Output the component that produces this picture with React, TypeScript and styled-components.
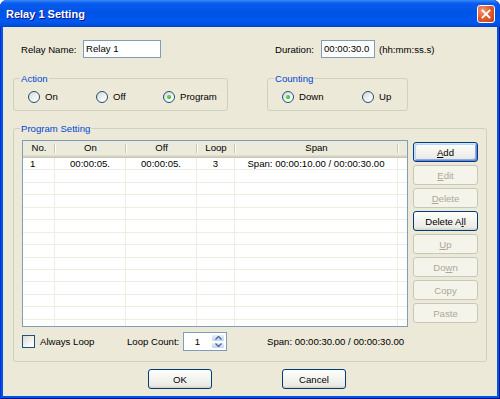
import React from 'react';
import styled, { createGlobalStyle, css } from 'styled-components';

const FACE = '#ECE9D8';
const GRID = '#EFEDE2';

const GlobalStyle = createGlobalStyle`
  html, body {
    margin: 0;
    padding: 0;
    background: #ffffff;
  }
  body {
    font-family: "Liberation Sans", Arial, sans-serif;
    font-size: 9.6px;
    color: #000000;
  }
`;

const Window = styled.div`
  width: 500px;
  height: 399px;
  box-sizing: border-box;
  display: flex;
  flex-direction: column;
  background: #0055E5;
  border-radius: 7px 7px 0 0;
  overflow: hidden;
  box-shadow: inset 1px 0 #0831D9, inset -1px 0 #00138C, inset 0 -1px #00138C;
`;

const TitleBar = styled.div`
  height: 27px;
  flex: none;
  display: flex;
  align-items: center;
  justify-content: space-between;
  padding: 0 5px 0 6px;
  background: linear-gradient(
    to bottom,
    #3A8CF8 0%,
    #0A5CEE 12%,
    #0053E6 45%,
    #0058EE 80%,
    #0050E0 92%,
    #0042C8 100%
  );
`;

const TitleText = styled.span`
  font-family: "Liberation Sans", Arial, sans-serif;
  font-weight: bold;
  font-size: 11px;
  color: #ffffff;
  text-shadow: 1px 1px #0F1089;
`;

const CloseButton = styled.button`
  width: 18px;
  height: 18px;
  padding: 0;
  border: 1px solid #ffffff;
  border-radius: 3px;
  background: radial-gradient(circle at 30% 30%, #F29A7C 0%, #E0602F 45%, #C63D14 100%);
  display: flex;
  align-items: center;
  justify-content: center;
`;

const Client = styled.div`
  flex: 1;
  margin: 0 3px 3px;
  background: ${FACE};
  display: flex;
  flex-direction: column;
  padding-left: 10px;
`;

const NameRow = styled.div`
  display: flex;
  align-items: center;
  height: 18px;
  margin-top: 13px;
  padding-left: 8px;
`;

const Label = styled.span<{ $width?: number; $gap?: number }>`
  flex: none;
  width: ${(p) => (p.$width ? `${p.$width}px` : 'auto')};
  margin-left: ${(p) => p.$gap || 0}px;
  white-space: nowrap;
`;

const TextBox = styled.div<{ $width: number }>`
  flex: none;
  width: ${(p) => p.$width}px;
  height: 18px;
  box-sizing: border-box;
  border: 1px solid #7F9DB9;
  background: #ffffff;
  padding: 0 2px;
  line-height: 16px;
  white-space: nowrap;
`;

const GroupsRow = styled.div`
  display: flex;
  margin-top: 20px;
`;

const Group = styled.div<{ $width: number; $height: number; $gap?: number }>`
  position: relative;
  flex: none;
  box-sizing: border-box;
  width: ${(p) => p.$width}px;
  height: ${(p) => p.$height}px;
  margin-left: ${(p) => p.$gap || 0}px;
  border: 1px solid #D0D0BF;
  border-radius: 3px;
`;

const Legend = styled.span`
  position: absolute;
  top: -7px;
  left: 6px;
  padding: 0 1px;
  line-height: 13px;
  background: ${FACE};
  color: #0046D5;
`;

const RadioRow = styled.div`
  display: flex;
  align-items: center;
  height: 100%;
  box-sizing: border-box;
  padding: 4px 0 0 14px;
`;

const RadioItem = styled.label<{ $width?: number }>`
  display: flex;
  align-items: center;
  gap: 5px;
  flex: none;
  width: ${(p) => (p.$width ? `${p.$width}px` : 'auto')};
`;

const RadioCircle = styled.span<{ $checked?: boolean }>`
  width: 12px;
  height: 12px;
  box-sizing: border-box;
  border-radius: 50%;
  border: 1px solid #1C5180;
  background: linear-gradient(135deg, #D6D6CE 0%, #F4F4EF 60%, #FFFFFF 100%);
  display: flex;
  align-items: center;
  justify-content: center;
  flex: none;

  &::after {
    content: '';
    display: ${(p) => (p.$checked ? 'block' : 'none')};
    width: 4px;
    height: 4px;
    border-radius: 50%;
    background: radial-gradient(circle at 35% 35%, #62DF5E, #21A121);
  }
`;

const ProgramGroup = styled(Group)`
  margin-top: 17px;
  padding: 11px 7px 0 8px;
  display: flex;
  flex-direction: column;
`;

const ListArea = styled.div`
  display: flex;
  align-items: flex-start;
`;

const ListView = styled.div`
  width: 386px;
  height: 187px;
  box-sizing: border-box;
  border: 1px solid #7F9DB9;
  background: #ffffff;
  overflow: hidden;
  flex: none;
`;

const HeaderRow = styled.div`
  display: flex;
  height: 17px;
  background: #EBEADB;
  box-shadow: inset 0 -1px #CBC7B8, inset 0 -2px #D6D2C2, inset 0 -3px #E2DECD;
`;

const HeaderCell = styled.div<{ $width: number }>`
  position: relative;
  flex: none;
  width: ${(p) => p.$width}px;
  line-height: 14px;
  text-align: center;

  &::after {
    content: '';
    position: absolute;
    right: 0;
    top: 3px;
    bottom: 5px;
    width: 1px;
    background: #C7C5B2;
    box-shadow: 1px 0 #ffffff;
  }
`;

const Row = styled.div`
  display: flex;
  height: 12.45px;
  box-sizing: border-box;
  border-bottom: 1px solid ${GRID};
`;

const Cell = styled.div<{ $width: number; $align?: string }>`
  flex: none;
  width: ${(p) => p.$width}px;
  box-sizing: border-box;
  border-right: 1px solid ${GRID};
  padding-left: ${(p) => (p.$align === 'left' ? '7px' : '0')};
  text-align: ${(p) => p.$align || 'center'};
  line-height: 11.45px;
  white-space: nowrap;
  overflow: hidden;
`;

const ButtonColumn = styled.div`
  display: flex;
  flex-direction: column;
  gap: 3px;
  margin-left: 5px;
  padding-top: 2px;
`;

const PushButton = styled.button<{ $default?: boolean; $width?: number }>`
  width: ${(p) => p.$width || 65}px;
  height: 20px;
  padding: 0;
  font: inherit;
  color: #000000;
  border: 1px solid #003C74;
  border-radius: 3px;
  background: linear-gradient(to bottom, #FFFFFF 0%, #F6F6F2 35%, #ECEBE6 85%, #D6D0C5 100%);
  ${(p) =>
    p.$default &&
    css`
      box-shadow: inset 1px 1px #CEE7FF, inset -1px -1px #6982EE, inset 2px 2px #BCD4F6,
        inset -2px -2px #89ADE4;
    `}

  &:disabled {
    border-color: #C9C7BA;
    background: #F5F4EA;
    color: #ACA899;
    box-shadow: none;
  }

  u {
    text-decoration-thickness: 1px;
    text-underline-offset: 1px;
  }
`;

const BottomRow = styled.div`
  display: flex;
  align-items: center;
  height: 19px;
  margin-top: 5px;
`;

const CheckItem = styled.label`
  display: flex;
  align-items: center;
  gap: 5px;
  width: 105px;
  flex: none;
`;

const CheckBox = styled.span`
  width: 13px;
  height: 13px;
  box-sizing: border-box;
  border: 1px solid #1C5180;
  background: linear-gradient(135deg, #DCDCD7 0%, #F4F4EF 60%, #FFFFFF 100%);
  flex: none;
`;

const Spinner = styled.div`
  display: flex;
  width: 44px;
  height: 19px;
  box-sizing: border-box;
  border: 1px solid #7F9DB9;
  background: #ffffff;
  flex: none;
`;

const SpinValue = styled.div`
  flex: 1;
  text-align: center;
  line-height: 17px;
`;

const SpinArrows = styled.div`
  width: 15px;
  display: flex;
  flex-direction: column;
  padding: 1px 1px 1px 0;
  box-sizing: border-box;
`;

const SpinArrow = styled.div`
  flex: 1;
  border-radius: 2px;
  border: 1px solid #ffffff;
  background: linear-gradient(to bottom, #E6EEFC, #C1D3FB);
  display: flex;
  align-items: center;
  justify-content: center;
`;

const DialogButtons = styled.div`
  display: flex;
  margin-top: 7px;
  padding-left: 135px;
  gap: 70px;
`;

const columns = [
  { title: 'No.', width: 32, align: 'left' },
  { title: 'On', width: 71 },
  { title: 'Off', width: 71 },
  { title: 'Loop', width: 38 },
  { title: 'Span', width: 163 },
];

const rows: string[][] = [['1', '00:00:05.', '00:00:05.', '3', 'Span: 00:00:10.00 / 00:00:30.00']];
while (rows.length < 14) rows.push(['', '', '', '', '']);

const Arrow = ({ up }: { up?: boolean }) => (
  <svg width="7" height="4" viewBox="0 0 7 4">
    <path d={up ? 'M0.5 3.5 L3.5 0.5 L6.5 3.5' : 'M0.5 0.5 L3.5 3.5 L6.5 0.5'} fill="none" stroke="#4D6185" strokeWidth="1.3" />
  </svg>
);

export default function App() {
  return (
    <>
      <GlobalStyle />
      <Window>
        <TitleBar>
          <TitleText>Relay 1 Setting</TitleText>
          <CloseButton aria-label="Close">
            <svg width="10" height="10" viewBox="0 0 10 10">
              <path d="M1.5 1.5 L8.5 8.5 M8.5 1.5 L1.5 8.5" stroke="#ffffff" strokeWidth="1.8" strokeLinecap="square" />
            </svg>
          </CloseButton>
        </TitleBar>
        <Client>
          <NameRow>
            <Label $width={62}>Relay Name:</Label>
            <TextBox $width={78}>Relay 1</TextBox>
            <Label $width={46} $gap={114}>
              Duration:
            </Label>
            <TextBox $width={54}>00:00:30.0</TextBox>
            <Label $gap={4}>(hh:mm:ss.s)</Label>
          </NameRow>

          <GroupsRow>
            <Group $width={215} $height={33}>
              <Legend>Action</Legend>
              <RadioRow>
                <RadioItem $width={68}>
                  <RadioCircle />
                  On
                </RadioItem>
                <RadioItem $width={67}>
                  <RadioCircle />
                  Off
                </RadioItem>
                <RadioItem>
                  <RadioCircle $checked />
                  Program
                </RadioItem>
              </RadioRow>
            </Group>
            <Group $width={141} $height={33} $gap={39}>
              <Legend>Counting</Legend>
              <RadioRow>
                <RadioItem $width={80}>
                  <RadioCircle $checked />
                  Down
                </RadioItem>
                <RadioItem>
                  <RadioCircle />
                  Up
                </RadioItem>
              </RadioRow>
            </Group>
          </GroupsRow>

          <ProgramGroup $width={474} $height={234}>
            <Legend>Program Setting</Legend>
            <ListArea>
              <ListView>
                <HeaderRow>
                  {columns.map((c) => (
                    <HeaderCell key={c.title} $width={c.width}>
                      {c.title}
                    </HeaderCell>
                  ))}
                </HeaderRow>
                {rows.map((r, i) => (
                  <Row key={i}>
                    {columns.map((c, j) => (
                      <Cell key={c.title} $width={c.width} $align={c.align}>
                        {r[j]}
                      </Cell>
                    ))}
                  </Row>
                ))}
              </ListView>
              <ButtonColumn>
                <PushButton $default>
                  <u>A</u>dd
                </PushButton>
                <PushButton disabled>
                  <u>E</u>dit
                </PushButton>
                <PushButton disabled>
                  <u>D</u>elete
                </PushButton>
                <PushButton>
                  Delete A<u>l</u>l
                </PushButton>
                <PushButton disabled>
                  <u>U</u>p
                </PushButton>
                <PushButton disabled>
                  Do<u>w</u>n
                </PushButton>
                <PushButton disabled>Copy</PushButton>
                <PushButton disabled>Paste</PushButton>
              </ButtonColumn>
            </ListArea>
            <BottomRow>
              <CheckItem>
                <CheckBox />
                Always Loop
              </CheckItem>
              <Label $width={56}>Loop Count:</Label>
              <Spinner>
                <SpinValue>1</SpinValue>
                <SpinArrows>
                  <SpinArrow>
                    <Arrow up />
                  </SpinArrow>
                  <SpinArrow>
                    <Arrow />
                  </SpinArrow>
                </SpinArrows>
              </Spinner>
              <Label $gap={40}>Span: 00:00:30.00 / 00:00:30.00</Label>
            </BottomRow>
          </ProgramGroup>

          <DialogButtons>
            <PushButton $width={64}>OK</PushButton>
            <PushButton $width={64}>Cancel</PushButton>
          </DialogButtons>
        </Client>
      </Window>
    </>
  );
}
